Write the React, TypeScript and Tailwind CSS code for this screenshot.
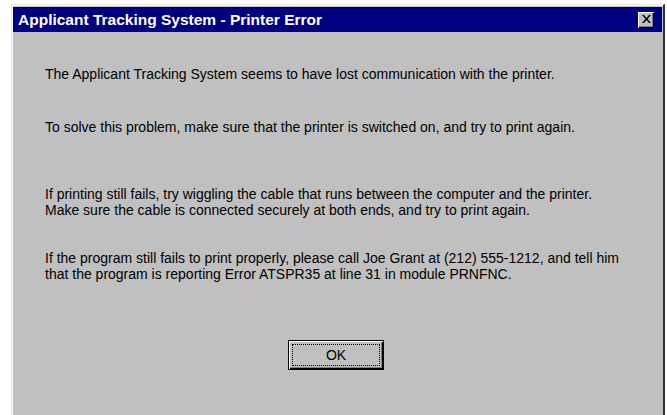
import React from 'react';

const font = { fontFamily: '"Liberation Sans", Arial, sans-serif' };

const CloseButton: React.FC = () => (
  <div className="flex h-[16px] w-[16px] items-center justify-center bg-[#c0c0c0] shadow-[inset_1px_1px_#ffffff,inset_-1px_-1px_#000000,inset_-2px_-2px_#808080]">
    <svg width="9" height="8" viewBox="0 0 9 8" className="mb-[1px]">
      <path d="M0 0h2l2.5 3 2.5-3h2L5.5 4 9 8H7L4.5 5 2 8H0l3.5-4z" fill="#000" />
    </svg>
  </div>
);

const OkButton: React.FC = () => (
  <button className="flex h-[30px] w-[96px] items-center justify-center border border-black bg-[#c0c0c0] p-[3px] shadow-[inset_1px_1px_#ffffff,inset_-1px_-1px_#000000,inset_-2px_-2px_#808080]">
    <span className="flex h-full w-full items-center justify-center border border-dotted border-black text-[14px] text-black">
      OK
    </span>
  </button>
);

export default function App() {
  return (
    <div className="h-[415px] w-[667px] overflow-hidden bg-white" style={font}>
      <div className="ml-[11px] mt-[4px] h-[420px] w-[654px] border-l border-t border-r-2 border-l-[#e4e4e4] border-t-[#e4e4e4] border-r-[#303030] bg-[#c0c0c0] pt-[2px] pl-[1px] pr-[1px] shadow-[inset_1px_1px_#ffffff]">
        <div className="flex h-[25px] items-center justify-between bg-[#000080] pl-[5px] pr-[8px]">
          <span className="text-[15.5px] font-bold text-white">Applicant Tracking System - Printer Error</span>
          <CloseButton />
        </div>

        <div className="pl-[32px] text-[14px] leading-[16px] text-black">
          <p className="mt-[34px]">The Applicant Tracking System seems to have lost communication with the printer.</p>
          <p className="mt-[37px]">To solve this problem, make sure that the printer is switched on, and try to print again.</p>
          <p className="mt-[51px]">
            If printing still fails, try wiggling the cable that runs between the computer and the printer.
            <br />
            Make sure the cable is connected securely at both ends, and try to print again.
          </p>
          <p className="mt-[32px]">
            If the program still fails to print properly, please call Joe Grant at (212) 555-1212, and tell him
            <br />
            that the program is reporting Error ATSPR35 at line 31 in module PRNFNC.
          </p>
        </div>

        <div className="mt-[58px] flex pl-[275px]">
          <OkButton />
        </div>
      </div>
    </div>
  );
}
